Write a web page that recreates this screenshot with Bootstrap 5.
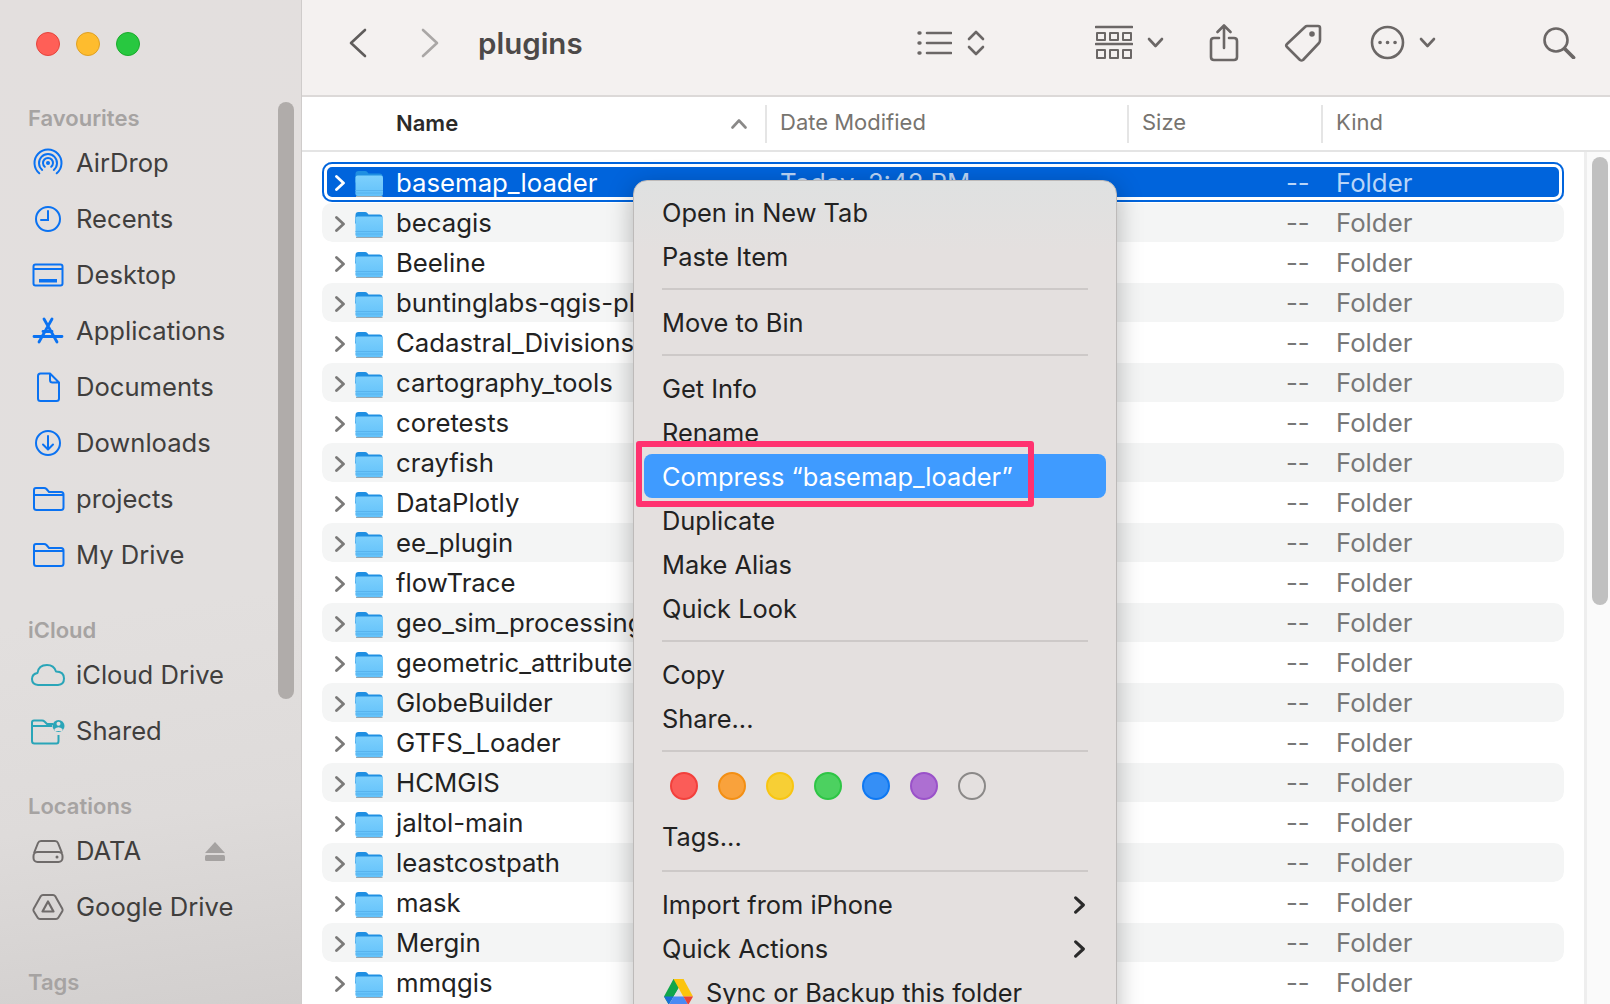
<!DOCTYPE html>
<html lang="en">
<head>
  <meta charset="UTF-8">
  <title>plugins</title>
  <link href="https://cdn.jsdelivr.net/npm/bootstrap@5.3.0/dist/css/bootstrap.min.css" rel="stylesheet">
  <style>
    html, body { margin: 0; height: 100%; overflow: hidden; }
    body { font-family: Inter, "Liberation Sans", sans-serif; background: #fff; }
    .finder { width: 1610px; height: 1004px; position: relative; overflow: hidden; }

    /* sidebar */
    .side { width: 302px; flex: none; padding-top: 32px; position: relative; border-right: 1px solid #cfcccb;
      background: linear-gradient(172deg, #e3dfde 0%, #e2dfde 60%, #dedbda 80%, #d2cfce 100%); }
    .lights { padding-left: 36px; gap: 16px; margin-bottom: 45px; }
    .light { width: 24px; height: 24px; border-radius: 50%; border: 1px solid; }
    .side-label { height: 33px; line-height: 35px; padding-left: 28px; font-size: 22px; font-weight: 600; color: #a6a3a2; }
    .side-list { margin-bottom: 31px; }
    .side-item { height: 56px; padding: 2px 0 0 30px; font-size: 25.600px; color: #403e3d; }
    .side-ico { width: 36px; height: 36px; margin-right: 10px; flex: none; }
    .eject { margin-left: auto; margin-right: 76px; width: 20px; height: 19px; }
    .side-thumb { position: absolute; left: 278px; top: 102px; width: 16px; height: 597px; border-radius: 8px; background: #b0acaa; }

    /* toolbar */
    .main-pane { flex: 1; min-width: 0; }
    .toolbar { height: 97px; background: #f4f1f0; border-bottom: 2px solid #dcd9d8; padding-bottom: 10px; color: #6b6766; }
    .tool-title { font-size: 29.500px; font-weight: 600; color: #4c4948; width: 104px; margin-left: 39px; margin-top: 2px; }
    .tool-ico { flex: none; fill: none; stroke: currentColor; stroke-width: 2.6; stroke-linecap: round; stroke-linejoin: round; }

    /* column header */
    .col-head { height: 55px; border-bottom: 2px solid #e4e4e4; color: #77746f; font-size: 22px; }
    .head-cell { height: 38px; border-left: 2px solid #e5e5e5; padding-left: 13px; line-height: 34px; }
    .head-name { width: 463px; padding-left: 94px; height: 38px; line-height: 33px; font-weight: 600; color: #2b2a29; font-size: 22px; }
    .sort-arrow { margin-left: 273px; margin-top: 1px; color: #8a8988; }

    /* file rows */
    .file-area { height: 852px; overflow: hidden; }
    .file-list { flex: 1; min-width: 0; padding: 10px 20px 0 20px; overflow: hidden; }
    .file-row { height: 40px; padding-top: 2px; font-size: 25.750px; color: #222; border-top: 1px solid transparent; background-clip: padding-box; border-radius: 10px; white-space: nowrap; }
    .file-row:nth-child(even) { background-color: #f4f5f5; }
    .file-row.picked { background-color: #0064dc; color: #fff; border-top: 0; box-shadow: inset 0 0 0 2px #0064dc, inset 0 0 0 5px #fff; }
    .r-arrow { width: 10px; margin-left: 13px; flex: none; stroke: #7b7a79; }
    .picked .r-arrow { stroke: #fff; }
    .r-folder { width: 28px; height: 28px; margin-left: 10px; flex: none; }
    .r-name { width: 384px; margin-left: 13px; flex: none; }
    .r-date { width: 506px; flex: none; color: #bcd6f7; }
    .r-size { width: 50px; flex: none; color: #777; }
    .r-kind { color: #777; }
    .picked .r-size, .picked .r-kind { color: #b9d5f8; }
    .scroll-track { width: 26px; flex: none; background: #fafafa; border-left: 3px solid #eee; padding: 5px 2px 0 5px; }
    .scroll-thumb { height: 448px; border-radius: 8px; background: #c0c0c0; }

    /* context menu */
    .ctx-menu.dropdown-menu { position: absolute; left: 633px; top: 180px; width: 484px; height: 860px; padding: 9px 10px 0;
      margin: 0; border: 1px solid #bdbab9; border-radius: 14px; font-size: 25.400px; color: #222;
      background: linear-gradient(to bottom, #dfe1e1 0, #e4e0df 70px); box-shadow: 0 6px 26px rgba(0, 0, 0, .28); }
    .ctx-item.dropdown-item { height: 44px; padding: 0 20px 0 18px; border-radius: 8px; color: #222; line-height: 46px; background: none; }
    .ctx-item.ctx-on { background: #3f9bff; color: #fff; }
    .ctx-sep.dropdown-divider { margin: 10px 18px; border-top: 2px solid #cdc9c8; opacity: 1; height: 0; }
    .ctx-sep.sep-wide { margin-top: 12px; margin-bottom: 11px; }
    .ctx-dots { height: 52px; gap: 20px; padding: 0 0 5px 26px; }
    .ctx-dot { width: 28px; height: 28px; border-radius: 50%; border: 2px solid; }
    .ctx-next { stroke: #2a2a2a; margin-right: 1px; }
    .ctx-drive { width: 29px; height: 26px; margin-left: 2px; margin-right: 13px; margin-top: -2px; }

    /* red annotation box */
    .mark-box { position: absolute; z-index: 1001; left: 636px; top: 441px; width: 398px; height: 66px; border: 6px solid #ff3270; border-radius: 3px; pointer-events: none; }
  </style>
</head>
<body>
  <svg width="0" height="0" class="position-absolute">
    <defs>
      <linearGradient id="fbody" x1="0" y1="0" x2="0" y2="1">
        <stop offset="0" stop-color="#7dd0fd"/>
        <stop offset="1" stop-color="#62c1fa"/>
      </linearGradient>
      <symbol id="i-folder" viewBox="0 0 28 28">
        <path d="M0.5 5q0-3 3-3h6.5q1.5 0 2.5 1.2l1 1.3h11q3 0 3 3v6h-27.5z" fill="#1f8fe2"/>
        <rect x="0.5" y="6.5" width="27.5" height="20.500" rx="2" fill="url(#fbody)"/>
        <path d="M0.5 21.500h27.500M0.5 24h27.500" stroke="#57b3ee" stroke-width="1"/>
        <path d="M1 27.500h26.500" stroke="#9aa7b0" stroke-width="1"/>
      </symbol>
      <symbol id="i-next" viewBox="0 0 10 16">
        <path d="M1.500 1.500l7 6.500-7 6.500" fill="none" stroke-width="2.800" stroke-linecap="round" stroke-linejoin="round"/>
      </symbol>
      <symbol id="i-sidefolder" viewBox="0 0 36 36">
        <path d="M4 12v-3q0-2 2-2h8q1.500 0 2.500 1l2.500 3h12q2.500 0 2.500 2.500v13q0 2.500-2.500 2.500h-24.500q-2.500 0-2.500-2.500zM4 14h29" fill="none" stroke="#0a72f2" stroke-width="2"/>
      </symbol>
    </defs>
  </svg>

  <div class="finder d-flex">
    <aside class="side">
      <div class="lights d-flex">
        <div class="light" style="background:#ff5f57;border-color:#e5443c"></div>
        <div class="light" style="background:#febc2e;border-color:#dfa023"></div>
        <div class="light" style="background:#28c840;border-color:#1aab2b"></div>
      </div>

      <div class="side-label">Favourites</div>
      <div class="side-list">
        <div class="side-item d-flex align-items-center">
          <svg class="side-ico" viewBox="0 0 36 36" fill="none" stroke="#0a72f2" stroke-width="2" stroke-linecap="round"><circle cx="18" cy="18" r="2" fill="#0a72f2" stroke="none"/><path d="M14.800 21.800A5 5 0 1 1 21.200 21.800M12.200 24.900A9 9 0 1 1 23.800 24.900M9.300 28.300A13.500 13.500 0 1 1 26.700 28.300"/></svg>
          AirDrop
        </div>
        <div class="side-item d-flex align-items-center">
          <svg class="side-ico" viewBox="0 0 36 36" fill="none" stroke="#0a72f2" stroke-width="2" stroke-linecap="round"><circle cx="18" cy="18" r="12"/><path d="M18 10v9h-7"/></svg>
          Recents
        </div>
        <div class="side-item d-flex align-items-center">
          <svg class="side-ico" viewBox="0 0 36 36" fill="none" stroke="#0a72f2" stroke-width="2"><rect x="3.500" y="7.500" width="29" height="21" rx="2"/><path d="M4 12h28"/><rect x="9" y="22" width="18" height="3.500" fill="#0a72f2" stroke="none"/></svg>
          Desktop
        </div>
        <div class="side-item d-flex align-items-center">
          <svg class="side-ico" viewBox="0 0 36 36" fill="none" stroke="#0a72f2" stroke-width="2.800" stroke-linecap="round"><path d="M22 6l-13 23M14 6l13 23M4 23.500h28M13 18.500h9"/></svg>
          Applications
        </div>
        <div class="side-item d-flex align-items-center">
          <svg class="side-ico" viewBox="0 0 36 36" fill="none" stroke="#0a72f2" stroke-width="2" stroke-linejoin="round"><path d="M8 7q0-2.500 2.500-2.500h9.500l9 9v16q0 2.500-2.500 2.500h-16q-2.500 0-2.500-2.500zM20 5v6q0 2.500 2.500 2.500h6"/></svg>
          Documents
        </div>
        <div class="side-item d-flex align-items-center">
          <svg class="side-ico" viewBox="0 0 36 36" fill="none" stroke="#0a72f2" stroke-width="2" stroke-linecap="round" stroke-linejoin="round"><circle cx="18" cy="18" r="12"/><path d="M18 11v13M13 19.500l5 5 5-5"/></svg>
          Downloads
        </div>
        <div class="side-item d-flex align-items-center">
          <svg class="side-ico"><use href="#i-sidefolder"/></svg>
          projects
        </div>
        <div class="side-item d-flex align-items-center">
          <svg class="side-ico"><use href="#i-sidefolder"/></svg>
          My Drive
        </div>
      </div>

      <div class="side-label">iCloud</div>
      <div class="side-list">
        <div class="side-item d-flex align-items-center">
          <svg class="side-ico" viewBox="0 0 36 36" fill="none" stroke="#2aa5b8" stroke-width="2" stroke-linejoin="round"><path d="M8 28q-6-.5-6-6q0-5 5.500-6q1-8 9.500-8q7 0 9 6.500q8 0 8 7q0 6-6 6.500z"/></svg>
          iCloud Drive
        </div>
        <div class="side-item d-flex align-items-center">
          <svg class="side-ico" viewBox="0 0 36 36" fill="none" stroke="#2aa5b8" stroke-width="2"><path d="M2 12v-2.500q0-2 2-2h8q1.500 0 2.500 1l2.500 2.500h6M2 13h20M2 12v16q0 2.500 2.500 2.500h22q2 0 2-2.500v-6"/><circle cx="28.500" cy="13" r="6" fill="#2aa5b8" stroke="none"/><circle cx="28.500" cy="10.800" r="2" fill="#e2dfde" stroke="none"/><path d="M24.500 16q4-3.500 8 0v2h-8z" fill="#e2dfde" stroke="none"/></svg>
          Shared
        </div>
      </div>

      <div class="side-label">Locations</div>
      <div class="side-list">
        <div class="side-item d-flex align-items-center">
          <svg class="side-ico" viewBox="0 0 36 36" fill="none" stroke="#6f6b6a" stroke-width="2" stroke-linejoin="round"><path d="M4 20l4-10q.8-2 3-2h14q2.200 0 3 2l4 10"/><rect x="3.500" y="19" width="29" height="10" rx="4"/><circle cx="27" cy="24" r="1.500" fill="#6f6b6a" stroke="none"/></svg>
          DATA
          <svg class="eject" viewBox="0 0 20 19" fill="#a5a2a1"><path d="M10 0l10 11h-20z"/><rect y="13" width="20" height="6" rx="1.500"/></svg>
        </div>
        <div class="side-item d-flex align-items-center">
          <svg class="side-ico" viewBox="0 0 36 36" fill="none" stroke="#6f6b6a" stroke-width="2" stroke-linejoin="round"><path d="M13 6h10q1.500 0 2.300 1.300l7 12.500q.7 1.200 0 2.400l-4 6.500q-.7 1.300-2.300 1.300h-16q-1.600 0-2.300-1.300l-4-6.500q-.7-1.200 0-2.400l7-12.500q.8-1.300 2.300-1.300z"/><path d="M18 12.500l5.500 10h-11z" stroke-width="2.200"/></svg>
          Google Drive
        </div>
      </div>

      <div class="side-label">Tags</div>
      <div class="side-thumb"></div>
    </aside>

    <main class="main-pane d-flex flex-column">
      <div class="toolbar d-flex align-items-center">
        <svg class="tool-ico" style="margin-left:47px;color:#5f5c5b" width="18" height="30" viewBox="0 0 18 30"><path d="M16 2l-14 13 14 13"/></svg>
        <svg class="tool-ico" style="margin-left:54px;color:#aaa7a6" width="18" height="30" viewBox="0 0 18 30"><path d="M2 2l14 13-14 13"/></svg>
        <div class="tool-title">plugins</div>
        <svg class="tool-ico" style="margin-left:335px" width="35" height="26" viewBox="0 0 35 26"><path d="M10 3h24M10 13h24M10 23h24"/><path d="M2 3h1M2 13h1M2 23h1" stroke-width="3.400"/></svg>
        <svg class="tool-ico" style="margin-left:15px" width="18" height="28" viewBox="0 0 18 28"><path d="M2 10l7-7 7 7M2 18l7 7 7-7"/></svg>
        <svg class="tool-ico" style="margin-left:110px" width="38" height="36" viewBox="0 0 38 36"><path d="M1 2h36M1 19h36" /><path d="M2 8h8v7h-8zM15 8h8v7h-8zM28 8h8v7h-8zM2 25h8v8h-8zM15 25h8v8h-8zM28 25h8v8h-8z" stroke-width="2"/></svg>
        <svg class="tool-ico" style="margin-left:14px" width="17" height="11" viewBox="0 0 17 11"><path d="M2 2l6.500 7 6.500-7"/></svg>
        <svg class="tool-ico" style="margin-left:45px" width="30" height="38" viewBox="0 0 30 38"><path d="M10 14h-5q-3 0-3 3v16q0 3 3 3h20q3 0 3-3v-16q0-3-3-3h-5M15 24v-22M8.500 8l6.500-6.500 6.500 6.500"/></svg>
        <svg class="tool-ico" style="margin-left:45px" width="38" height="38" viewBox="0 0 38 38"><path d="M23 2h11q2 0 2 2v12q0 2-1 3l-16 17q-1.500 1-3 0l-13-13q-1.500-1.500 0-3l18-17q1-1 2-1z"/><circle cx="28" cy="10" r="1.500" fill="currentColor"/></svg>
        <svg class="tool-ico" style="margin-left:48px" width="35" height="35" viewBox="0 0 35 35"><circle cx="17.500" cy="17.500" r="15.500"/><path d="M10 17.500h.1M17.500 17.500h.1M25 17.500h.1" stroke-width="3.600"/></svg>
        <svg class="tool-ico" style="margin-left:14px" width="17" height="11" viewBox="0 0 17 11"><path d="M2 2l6.500 7 6.500-7"/></svg>
        <svg class="tool-ico" style="margin-left:106px" width="34" height="33" viewBox="0 0 34 33" stroke-width="3"><circle cx="14" cy="14" r="11.500"/><path d="M22.500 22.500l9 9" stroke-width="3.800"/></svg>
      </div>

      <div class="col-head d-flex align-items-center">
        <div class="head-name d-flex align-items-center">Name
          <svg class="tool-ico sort-arrow" width="16" height="10" viewBox="0 0 16 10" stroke-width="2"><path d="M1.500 8.500l6.500-7 6.500 7"/></svg>
        </div>
        <div class="head-cell" style="width:362px">Date Modified</div>
        <div class="head-cell" style="width:194px">Size</div>
        <div class="head-cell">Kind</div>
      </div>

      <div class="file-area d-flex">
        <div class="file-list">
          <div class="file-row picked d-flex align-items-center"><svg class="r-arrow" height="16"><use href="#i-next"/></svg><svg class="r-folder"><use href="#i-folder"/></svg><span class="r-name">basemap_loader</span><span class="r-date">Today, 2:42 PM</span><span class="r-size">--</span><span class="r-kind">Folder</span></div>
          <div class="file-row d-flex align-items-center"><svg class="r-arrow" height="16"><use href="#i-next"/></svg><svg class="r-folder"><use href="#i-folder"/></svg><span class="r-name">becagis</span><span class="r-date"></span><span class="r-size">--</span><span class="r-kind">Folder</span></div>
          <div class="file-row d-flex align-items-center"><svg class="r-arrow" height="16"><use href="#i-next"/></svg><svg class="r-folder"><use href="#i-folder"/></svg><span class="r-name">Beeline</span><span class="r-date"></span><span class="r-size">--</span><span class="r-kind">Folder</span></div>
          <div class="file-row d-flex align-items-center"><svg class="r-arrow" height="16"><use href="#i-next"/></svg><svg class="r-folder"><use href="#i-folder"/></svg><span class="r-name">buntinglabs-qgis-plugin</span><span class="r-date"></span><span class="r-size">--</span><span class="r-kind">Folder</span></div>
          <div class="file-row d-flex align-items-center"><svg class="r-arrow" height="16"><use href="#i-next"/></svg><svg class="r-folder"><use href="#i-folder"/></svg><span class="r-name">Cadastral_Divisions</span><span class="r-date"></span><span class="r-size">--</span><span class="r-kind">Folder</span></div>
          <div class="file-row d-flex align-items-center"><svg class="r-arrow" height="16"><use href="#i-next"/></svg><svg class="r-folder"><use href="#i-folder"/></svg><span class="r-name">cartography_tools</span><span class="r-date"></span><span class="r-size">--</span><span class="r-kind">Folder</span></div>
          <div class="file-row d-flex align-items-center"><svg class="r-arrow" height="16"><use href="#i-next"/></svg><svg class="r-folder"><use href="#i-folder"/></svg><span class="r-name">coretests</span><span class="r-date"></span><span class="r-size">--</span><span class="r-kind">Folder</span></div>
          <div class="file-row d-flex align-items-center"><svg class="r-arrow" height="16"><use href="#i-next"/></svg><svg class="r-folder"><use href="#i-folder"/></svg><span class="r-name">crayfish</span><span class="r-date"></span><span class="r-size">--</span><span class="r-kind">Folder</span></div>
          <div class="file-row d-flex align-items-center"><svg class="r-arrow" height="16"><use href="#i-next"/></svg><svg class="r-folder"><use href="#i-folder"/></svg><span class="r-name">DataPlotly</span><span class="r-date"></span><span class="r-size">--</span><span class="r-kind">Folder</span></div>
          <div class="file-row d-flex align-items-center"><svg class="r-arrow" height="16"><use href="#i-next"/></svg><svg class="r-folder"><use href="#i-folder"/></svg><span class="r-name">ee_plugin</span><span class="r-date"></span><span class="r-size">--</span><span class="r-kind">Folder</span></div>
          <div class="file-row d-flex align-items-center"><svg class="r-arrow" height="16"><use href="#i-next"/></svg><svg class="r-folder"><use href="#i-folder"/></svg><span class="r-name">flowTrace</span><span class="r-date"></span><span class="r-size">--</span><span class="r-kind">Folder</span></div>
          <div class="file-row d-flex align-items-center"><svg class="r-arrow" height="16"><use href="#i-next"/></svg><svg class="r-folder"><use href="#i-folder"/></svg><span class="r-name">geo_sim_processing</span><span class="r-date"></span><span class="r-size">--</span><span class="r-kind">Folder</span></div>
          <div class="file-row d-flex align-items-center"><svg class="r-arrow" height="16"><use href="#i-next"/></svg><svg class="r-folder"><use href="#i-folder"/></svg><span class="r-name">geometric_attributes</span><span class="r-date"></span><span class="r-size">--</span><span class="r-kind">Folder</span></div>
          <div class="file-row d-flex align-items-center"><svg class="r-arrow" height="16"><use href="#i-next"/></svg><svg class="r-folder"><use href="#i-folder"/></svg><span class="r-name">GlobeBuilder</span><span class="r-date"></span><span class="r-size">--</span><span class="r-kind">Folder</span></div>
          <div class="file-row d-flex align-items-center"><svg class="r-arrow" height="16"><use href="#i-next"/></svg><svg class="r-folder"><use href="#i-folder"/></svg><span class="r-name">GTFS_Loader</span><span class="r-date"></span><span class="r-size">--</span><span class="r-kind">Folder</span></div>
          <div class="file-row d-flex align-items-center"><svg class="r-arrow" height="16"><use href="#i-next"/></svg><svg class="r-folder"><use href="#i-folder"/></svg><span class="r-name">HCMGIS</span><span class="r-date"></span><span class="r-size">--</span><span class="r-kind">Folder</span></div>
          <div class="file-row d-flex align-items-center"><svg class="r-arrow" height="16"><use href="#i-next"/></svg><svg class="r-folder"><use href="#i-folder"/></svg><span class="r-name">jaltol-main</span><span class="r-date"></span><span class="r-size">--</span><span class="r-kind">Folder</span></div>
          <div class="file-row d-flex align-items-center"><svg class="r-arrow" height="16"><use href="#i-next"/></svg><svg class="r-folder"><use href="#i-folder"/></svg><span class="r-name">leastcostpath</span><span class="r-date"></span><span class="r-size">--</span><span class="r-kind">Folder</span></div>
          <div class="file-row d-flex align-items-center"><svg class="r-arrow" height="16"><use href="#i-next"/></svg><svg class="r-folder"><use href="#i-folder"/></svg><span class="r-name">mask</span><span class="r-date"></span><span class="r-size">--</span><span class="r-kind">Folder</span></div>
          <div class="file-row d-flex align-items-center"><svg class="r-arrow" height="16"><use href="#i-next"/></svg><svg class="r-folder"><use href="#i-folder"/></svg><span class="r-name">Mergin</span><span class="r-date"></span><span class="r-size">--</span><span class="r-kind">Folder</span></div>
          <div class="file-row d-flex align-items-center"><svg class="r-arrow" height="16"><use href="#i-next"/></svg><svg class="r-folder"><use href="#i-folder"/></svg><span class="r-name">mmqgis</span><span class="r-date"></span><span class="r-size">--</span><span class="r-kind">Folder</span></div>
        </div>
        <div class="scroll-track"><div class="scroll-thumb"></div></div>
      </div>
    </main>

    <div class="ctx-menu dropdown-menu show">
      <div class="ctx-item dropdown-item">Open in New Tab</div>
      <div class="ctx-item dropdown-item">Paste Item</div>
      <div class="ctx-sep dropdown-divider"></div>
      <div class="ctx-item dropdown-item">Move to Bin</div>
      <div class="ctx-sep dropdown-divider"></div>
      <div class="ctx-item dropdown-item">Get Info</div>
      <div class="ctx-item dropdown-item">Rename</div>
      <div class="ctx-item ctx-on dropdown-item">Compress “basemap_loader”</div>
      <div class="ctx-item dropdown-item">Duplicate</div>
      <div class="ctx-item dropdown-item">Make Alias</div>
      <div class="ctx-item dropdown-item">Quick Look</div>
      <div class="ctx-sep dropdown-divider"></div>
      <div class="ctx-item dropdown-item">Copy</div>
      <div class="ctx-item dropdown-item">Share...</div>
      <div class="ctx-sep dropdown-divider"></div>
      <div class="ctx-dots d-flex align-items-center">
        <div class="ctx-dot" style="background:#fb5c58;border-color:#f2403c"></div>
        <div class="ctx-dot" style="background:#f9a23c;border-color:#f38f14"></div>
        <div class="ctx-dot" style="background:#f7cf35;border-color:#f8c512"></div>
        <div class="ctx-dot" style="background:#4cd160;border-color:#2ec545"></div>
        <div class="ctx-dot" style="background:#358ff6;border-color:#0e78f2"></div>
        <div class="ctx-dot" style="background:#ad6fd2;border-color:#9a52c9"></div>
        <div class="ctx-dot" style="border-color:#8b8988"></div>
      </div>
      <div class="ctx-item dropdown-item">Tags...</div>
      <div class="ctx-sep sep-wide dropdown-divider"></div>
      <div class="ctx-item dropdown-item d-flex align-items-center justify-content-between">Import from iPhone <svg class="ctx-next" width="11" height="18"><use href="#i-next"/></svg></div>
      <div class="ctx-item dropdown-item d-flex align-items-center justify-content-between">Quick Actions <svg class="ctx-next" width="11" height="18"><use href="#i-next"/></svg></div>
      <div class="ctx-item dropdown-item d-flex align-items-center">
        <svg class="ctx-drive" viewBox="0 0 29 26"><path d="M9.500 0h10l-5 9-5.500 9-5-.1z" fill="#10a64a"/><path d="M9.500 0l-9.500 17.500 4.700 8 9.800-17z" fill="#10a64a"/><path d="M9.500 0h10l9.500 17.500h-9.700z" fill="#fcc40d"/><path d="M0 17.500h9.700l-5 8z" fill="#1a6fd8"/><path d="M9.700 17.500h9.700l5 8.500h-19.700z" fill="#4a8af4"/><path d="M19.300 17.500h9.700l-4.700 8.500z" fill="#ea4335"/></svg>
        Sync or Backup this folder
      </div>
    </div>

    <div class="mark-box"></div>
  </div>

  <script src="https://cdn.jsdelivr.net/npm/bootstrap@5.3.0/dist/js/bootstrap.bundle.min.js"></script>
</body>
</html>
